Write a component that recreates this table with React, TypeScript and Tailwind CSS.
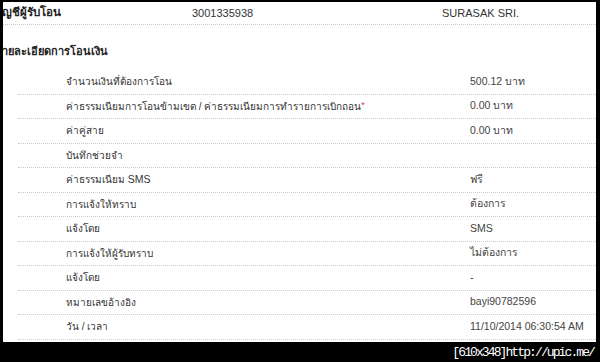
import React from "react";

const rows: { label: React.ReactNode; value: string }[] = [
  { label: "จำนวนเงินที่ต้องการโอน", value: "500.12 บาท" },
  {
    label: (
      <>
        ค่าธรรมเนียมการโอนข้ามเขต / ค่าธรรมเนียมการทำรายการเบิกถอน
        <span className="text-[#e0303a] align-top text-[9px]">*</span>
      </>
    ),
    value: "0.00 บาท",
  },
  { label: "ค่าคู่สาย", value: "0.00 บาท" },
  { label: "บันทึกช่วยจำ", value: "" },
  {
    label: (
      <>
        ค่าธรรมเนียม <span className="text-[10.5px]">SMS</span>
      </>
    ),
    value: "ฟรี",
  },
  { label: "การแจ้งให้ทราบ", value: "ต้องการ" },
  { label: "แจ้งโดย", value: "SMS" },
  { label: "การแจ้งให้ผู้รับทราบ", value: "ไม่ต้องการ" },
  { label: "แจ้งโดย", value: "-" },
  { label: "หมายเลขอ้างอิง", value: "bayi90782596" },
  { label: "วัน / เวลา", value: "11/10/2014 06:30:54 AM" },
];

export default function App() {
  return (
    <div className="w-[600px] h-[362px] bg-black flex flex-col font-['Liberation_Sans',sans-serif]">
      <div className="ml-[3px] mt-[2px] w-[593px] h-[340px] bg-white overflow-hidden">
        {/* header row */}
        <div className="h-[23px] flex items-center border-b border-dotted border-[#c9c9c9] text-[11px] text-[#222]">
          <div className="w-[197px] -ml-[8px] shrink-0 font-bold text-[11.5px]">บัญชีผู้รับโอน</div>
          <div className="w-[250px] shrink-0 text-[#333]">3001335938</div>
          <div className="text-[#333]">SURASAK SRI.</div>
        </div>

        {/* section title */}
        <div className="mt-[16px] h-[20px] flex items-center -ml-[7px] text-[11px] font-bold text-[#222]">
          รายละเอียดการโอนเงิน
        </div>

        {/* detail rows */}
        <div className="mt-[9px] ml-[15px]">
          {rows.map((r, i) => (
            <div
              key={i}
              className="grid grid-cols-[452px_1fr] items-center h-[24.5px] border-b border-dotted border-[#c9c9c9] text-[10.5px]"
            >
              <div className="pl-[48px] text-[#333] whitespace-nowrap text-[10px]">{r.label}</div>
              <div className="text-[#444] whitespace-nowrap">{r.value}</div>
            </div>
          ))}
        </div>
      </div>

      <div className="flex justify-end pr-[6px] mt-[1px]">
        <span className="font-['Liberation_Mono',monospace] text-[13px] tracking-[-1.9px] text-white">
          [610x348]http://upic.me/
        </span>
      </div>
    </div>
  );
}
